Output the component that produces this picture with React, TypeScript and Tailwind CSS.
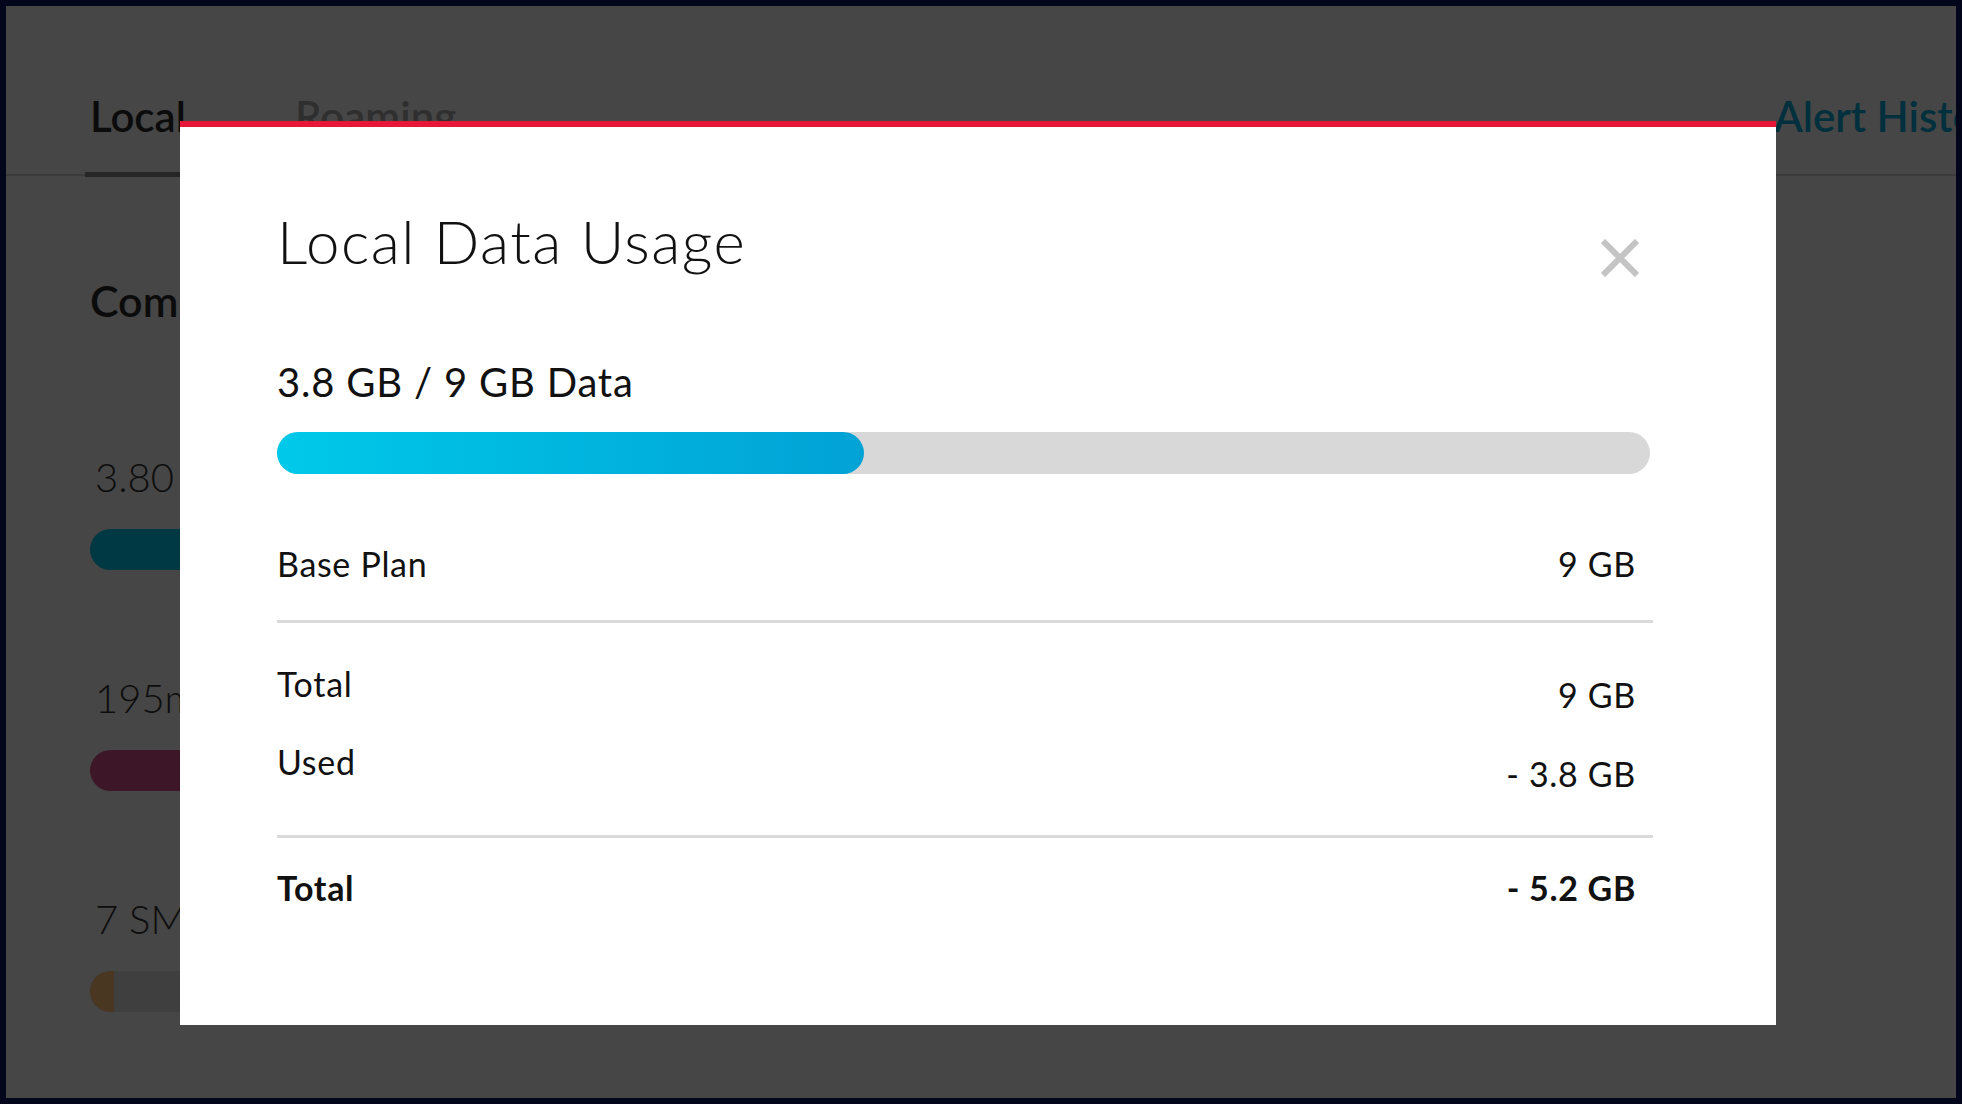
export default function App() {
  const usage = [
    { label: "3.80 GB of 9 GB", track: "bg-[#003843]", fill: "w-[1000px] bg-[#003843]" },
    { label: "195min of Unlimited", track: "bg-[#3d1628]", fill: "w-[1000px] bg-[#3d1628]" },
    { label: "7 SMS of Unlimited", track: "bg-[#3f3f3f]", fill: "w-[24px] bg-[#4a3722]" },
  ];

  return (
    <div className="min-h-screen bg-[#03061a] p-[6px] font-['Lato',sans-serif]">
      <div className="relative h-[1092px] overflow-hidden bg-[#464646]">
        {/* page behind the modal, already dimmed */}
        <div className="pt-[89px]">
          <div className="flex border-b-2 border-[#3b3b3b]">
            <div className="ml-[79px] w-[210px] -mb-[3px] border-b-[5px] border-[#262626] pb-[35px] pl-[5px]">
              <span className="block text-[42px] leading-[42px] font-semibold text-[#0b0b0b]">Local</span>
            </div>
            <div className="pb-[35px]">
              <span className="block text-[42px] leading-[42px] font-semibold text-[#2f2f2f]">Roaming</span>
            </div>
            <div className="ml-auto w-[182px] overflow-hidden pb-[35px]">
              <span className="block whitespace-nowrap text-[42px] leading-[42px] font-semibold text-[#00303d]">Alert History</span>
            </div>
          </div>

          <div className="pl-[84px]">
            <h2 className="mt-[103px] text-[43px] leading-[43px] font-semibold text-[#0b0b0b]">Combined Usage</h2>
            <div className="mt-[135px] flex flex-col gap-[108px]">
              {usage.map((u) => (
                <div key={u.label}>
                  <p className="pl-[5px] text-[40px] leading-[40px] font-light text-[#0d0d0d]">{u.label}</p>
                  <div className={`mt-[32px] flex h-[41px] w-[1000px] overflow-hidden rounded-full ${u.track}`}>
                    <div className={`h-full ${u.fill}`} />
                  </div>
                </div>
              ))}
            </div>
          </div>
        </div>

        {/* modal */}
        <div className="absolute left-[174px] top-[115px] h-[904px] w-[1596px] border-t-[6px] border-[#e8173a] bg-white pl-[97px] pt-[84px] text-[#111111]">
          <div className="w-[1376px]">
            <div className="flex items-start justify-between">
              <h1 className="text-[60px] leading-[60px] font-light tracking-[0.025em]">Local Data Usage</h1>
              <button className="mt-[28px] mr-[14px] text-[#c4c4c4]">
                <svg width="38" height="38" viewBox="0 0 38 38">
                  <path d="M2 2 L36 36 M36 2 L2 36" stroke="currentColor" strokeWidth="6" fill="none" />
                </svg>
              </button>
            </div>

            <p className="mt-[85px] text-[40px] leading-[40px] tracking-[0.02em]">3.8 GB / 9 GB Data</p>

            <div className="mt-[30px] h-[42px] w-[1373px] rounded-full bg-[#d8d8d8]">
              <div className="h-full w-[587px] rounded-full bg-gradient-to-r from-[#00c9e9] to-[#02a2d5]" />
            </div>

            <div className="mt-[73px] flex justify-between pr-[17px] text-[34px] leading-[34px] tracking-[0.02em]">
              <span>Base Plan</span>
              <span>9 GB</span>
            </div>

            <div className="mt-[39px] h-[3px] bg-[#dadada]" />

            <div className="flex justify-between pr-[17px] text-[34px] leading-[34px] tracking-[0.02em]">
              <div className="flex flex-col gap-[44px] pt-[44px]">
                <span>Total</span>
                <span>Used</span>
              </div>
              <div className="flex flex-col items-end gap-[45px] pt-[55px] pb-[44px]">
                <span>9 GB</span>
                <span>- 3.8 GB</span>
              </div>
            </div>

            <div className="h-[3px] bg-[#dadada]" />

            <div className="mt-[33px] flex justify-between pr-[17px] text-[34px] leading-[34px] font-bold tracking-[0.02em]">
              <span>Total</span>
              <span>- 5.2 GB</span>
            </div>
          </div>
        </div>
      </div>
    </div>
  );
}
